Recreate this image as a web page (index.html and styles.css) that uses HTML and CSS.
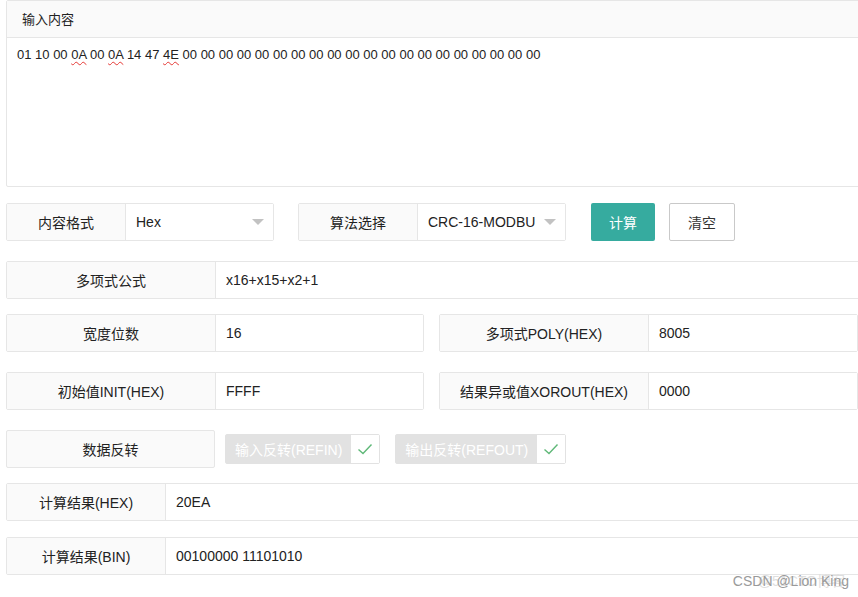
FILE: index.html
```html
<!DOCTYPE html>
<html lang="zh">
<head>
<meta charset="utf-8">
<title>CRC计算</title>
<link rel="stylesheet" href="styles.css">
</head>
<body>
<div class="page">
  <div class="panel">
    <div class="panel-head">输入内容</div>
    <div class="panel-body">01 10 00 <span class="sp">0A</span> 00 <span class="sp">0A</span> 14 47 <span class="sp">4E</span> 00 00 00 00 00 00 00 00 00 00 00 00 00 00 00 00 00 00 00 00</div>
  </div>

  <div class="row-tools">
    <div class="field">
      <div class="label w119">内容格式</div>
      <div class="select"><span>Hex</span><i class="caret"></i></div>
    </div>
    <div class="field">
      <div class="label w119">算法选择</div>
      <div class="select"><span>CRC-16-MODBU</span><i class="caret"></i></div>
    </div>
    <button class="btn btn-primary">计算</button>
    <button class="btn btn-plain">清空</button>
  </div>

  <div class="item full r-poly">
    <div class="label w209">多项式公式</div>
    <div class="value">x16+x15+x2+1</div>
  </div>

  <div class="half r-width">
    <div class="item">
      <div class="label w209">宽度位数</div>
      <div class="value">16</div>
    </div>
    <div class="item">
      <div class="label w209">多项式POLY(HEX)</div>
      <div class="value">8005</div>
    </div>
  </div>

  <div class="half r-init">
    <div class="item">
      <div class="label w209">初始值INIT(HEX)</div>
      <div class="value">FFFF</div>
    </div>
    <div class="item">
      <div class="label w209">结果异或值XOROUT(HEX)</div>
      <div class="value">0000</div>
    </div>
  </div>

  <div class="row-reverse">
    <div class="label w209 boxed">数据反转</div>
    <div class="checks">
      <div class="check">
        <span class="check-text">输入反转(REFIN)</span>
        <span class="check-box"><svg width="16" height="12" viewBox="0 0 16 12"><path d="M1.5 6.5 L6 10.5 L14.5 1.5" fill="none" stroke="#5fb878" stroke-width="1.4"/></svg></span>
      </div>
      <div class="check">
        <span class="check-text">输出反转(REFOUT)</span>
        <span class="check-box"><svg width="16" height="12" viewBox="0 0 16 12"><path d="M1.5 6.5 L6 10.5 L14.5 1.5" fill="none" stroke="#5fb878" stroke-width="1.4"/></svg></span>
      </div>
    </div>
  </div>

  <div class="item full r-hex">
    <div class="label w159">计算结果(HEX)</div>
    <div class="value">20EA</div>
  </div>

  <div class="item full r-bin">
    <div class="label w159">计算结果(BIN)</div>
    <div class="value">00100000 11101010</div>
  </div>

  <div class="watermark"><span class="wm-back">@51CTO博客</span><span class="wm-front">CSDN @Lion King</span></div>
</div>
</body>
</html>
```

FILE: styles.css
```css
html, body {
  margin: 0;
  padding: 0;
  overflow: hidden;
  background: #fff;
}
body {
  font-family: "Liberation Sans", Arial, "Noto Sans CJK SC", sans-serif;
  font-size: 14px;
  color: #222;
}
.page {
  position: relative;
  width: 862px;
  height: 597px;
  padding-left: 6px;
  box-sizing: border-box;
}
.panel {
  border: 1px solid #e6e6e6;
  border-radius: 2px;
  height: 187px;
  box-sizing: border-box;
}
.panel-head {
  height: 37px;
  line-height: 37px;
  background: #fafafa;
  border-bottom: 1px solid #e6e6e6;
  padding-left: 15px;
  box-sizing: border-box;
  font-size: 13px;
  color: #222;
}
.panel-body {
  padding: 8px 10px;
  line-height: 18px;
  font-size: 13px;
}
.sp {
  text-decoration: underline wavy #e53935;
  text-decoration-thickness: 1px;
  text-underline-offset: 2px;
}
.row-tools {
  display: flex;
  align-items: center;
  margin-top: 16px;
  height: 38px;
}
.field {
  display: flex;
  width: 268px;
  height: 38px;
  border: 1px solid #e6e6e6;
  border-radius: 2px;
  box-sizing: border-box;
  margin-right: 24px;
}
.label {
  background: #fafafa;
  border-right: 1px solid #e6e6e6;
  display: flex;
  align-items: center;
  justify-content: center;
  flex-shrink: 0;
  box-sizing: border-box;
  color: #222;
}
.w119 { width: 119px; }
.w209 { width: 209px; }
.w159 { width: 159px; }
.select {
  flex: 1;
  display: flex;
  align-items: center;
  justify-content: space-between;
  padding: 0 9px 0 10px;
  box-sizing: border-box;
  background: #fff;
}
.caret {
  width: 0;
  height: 0;
  border-left: 6px solid transparent;
  border-right: 6px solid transparent;
  border-top: 6px solid #c2c2c2;
}
.btn {
  height: 38px;
  font: inherit;
  font-size: 14px;
  border-radius: 2px;
  box-sizing: border-box;
  padding: 0;
  cursor: pointer;
}
.btn-primary {
  width: 64px;
  background: #36ab9f;
  color: #fff;
  border: none;
  margin-left: 1px;
}
.btn-plain {
  width: 66px;
  background: #fff;
  color: #333;
  border: 1px solid #c9c9c9;
  margin-left: 14px;
}
.item {
  display: flex;
  height: 38px;
  border: 1px solid #e6e6e6;
  border-radius: 2px;
  box-sizing: border-box;
}
.item .value {
  flex: 1;
  display: flex;
  align-items: center;
  padding-left: 10px;
  background: #fff;
}
.full {
  width: 860px;
}
.half {
  display: grid;
  grid-template-columns: 418px 419px;
  column-gap: 15px;
}
.r-poly { margin-top: 20px; }
.r-width { margin-top: 15px; }
.r-init { margin-top: 20px; }
.row-reverse {
  margin-top: 20px;
  display: flex;
  align-items: center;
  height: 38px;
}
.boxed {
  height: 38px;
  border: 1px solid #e6e6e6;
  border-radius: 2px;
}
.checks {
  display: flex;
  gap: 15px;
  margin-left: 10px;
}
.check {
  display: flex;
  height: 30px;
  border: 1px solid #e2e2e2;
  border-radius: 2px;
  box-sizing: border-box;
}
.check-text {
  background: #e2e2e2;
  color: #fff;
  padding: 0 9px;
  display: flex;
  align-items: center;
  font-size: 14px;
}
.check-box {
  width: 28px;
  display: flex;
  align-items: center;
  justify-content: center;
  background: #fff;
}
.r-hex { margin-top: 15px; }
.r-bin { margin-top: 16px; }
.watermark {
  position: absolute;
  right: 13px;
  bottom: 8px;
  font-size: 14px;
  line-height: 16px;
  height: 16px;
}
.wm-front {
  position: relative;
  color: #9a9a9a;
}
.wm-back {
  position: absolute;
  right: 4px;
  top: 0;
  color: #dedede;
  white-space: nowrap;
}
```
